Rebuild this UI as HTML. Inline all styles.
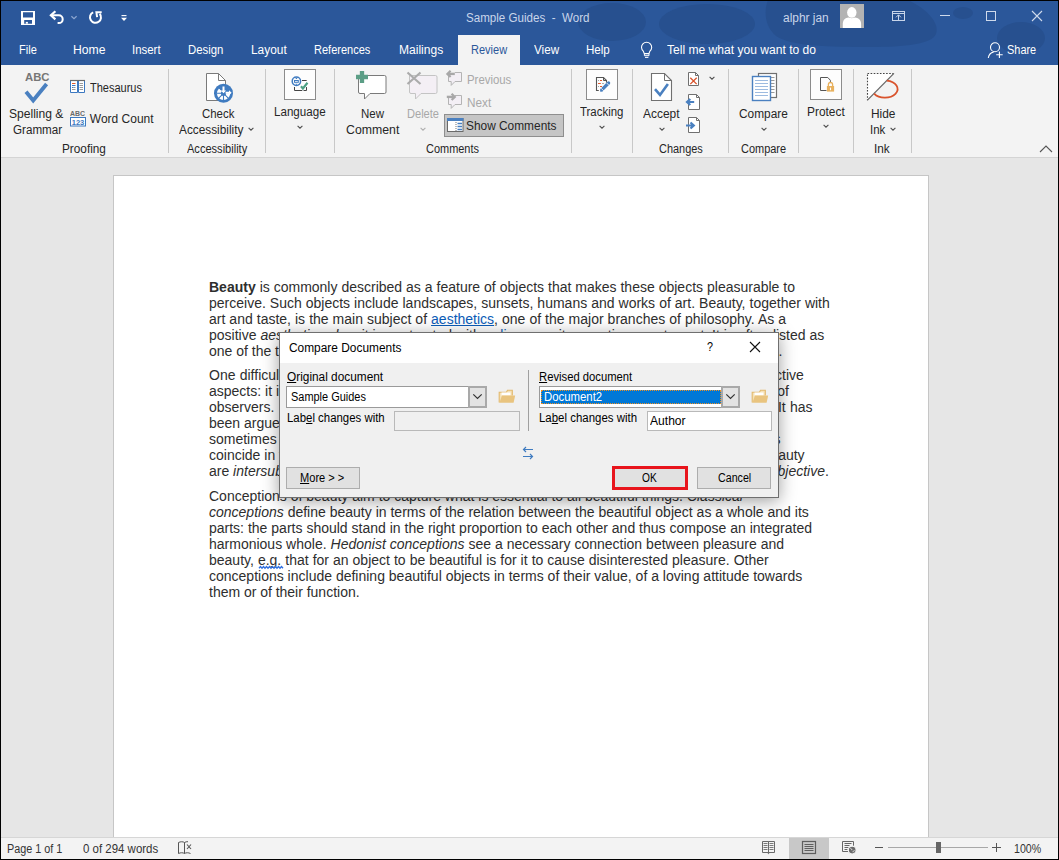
<!DOCTYPE html><html><head><meta charset="utf-8"><style>
*{margin:0;padding:0}
html,body{width:1059px;height:860px;overflow:hidden}
body{position:relative;background:#000;font-family:"Liberation Sans",sans-serif}
.tx{position:absolute;white-space:nowrap;line-height:normal;transform-origin:0 0}
.tx b{font-weight:bold}
.dl{position:absolute;left:0;white-space:nowrap;font-size:14px;line-height:normal;color:#2e2e2e}
.dl a{color:#0b5cb8;text-decoration:underline}
.dl u.w{text-decoration:none}
svg{overflow:visible}
</style></head><body><div style="position:absolute;left:1px;top:1px;width:1057px;height:64px;background:#2b579a"></div><svg style="position:absolute;left:0px;top:0px;" width="1059" height="65" viewBox="0 0 1059 65"><clipPath id="tbc"><rect x="1" y="1" width="1057" height="64"/></clipPath>
<g fill="#27508f" clip-path="url(#tbc)">
<ellipse cx="612" cy="22" rx="34" ry="19"/>
<ellipse cx="707" cy="24" rx="48" ry="20"/>
<path d="M768 0H908C925 8 940 22 936 34C932 44 905 47 870 47C830 47 790 46 776 36C764 26 764 10 768 0z"/>
<ellipse cx="1021" cy="38" rx="24" ry="16"/>
<ellipse cx="963" cy="13" rx="10" ry="6"/>
</g></svg><svg style="position:absolute;left:19px;top:9px;" width="18" height="18" viewBox="0 0 18 18"><path fill="#fff" fill-rule="evenodd" d="M2 2h14v14H2z M4 3.2h10v5.3H4z M5.2 11h7.8v3.7H5.2z"/><rect x="6.8" y="12.9" width="2.1" height="1.8" fill="#fff"/></svg><svg style="position:absolute;left:48px;top:9px;" width="20" height="18" viewBox="0 0 20 18"><path d="M2.8 6.3H10.8A3.9 3.9 0 0 1 10.8 14.1H9.6" fill="none" stroke="#fff" stroke-width="2"/>
<path d="M7.4 2.2L2.9 6.3L7.4 10.4" fill="none" stroke="#fff" stroke-width="2.2"/></svg><svg style="position:absolute;left:69px;top:13px;" width="10" height="8" viewBox="0 0 10 8"><path d="M2.4 3.2l2.6 2.4l2.6-2.4" fill="none" stroke="#8da7d1" stroke-width="1.2"/></svg><svg style="position:absolute;left:87px;top:9px;" width="18" height="18" viewBox="0 0 18 18"><path d="M6.17 3.32A5.5 5.5 0 1 0 12.7 4.76" fill="none" stroke="#fff" stroke-width="2"/>
<path d="M14.7 3.3H9.4L10.1 8.2" fill="none" stroke="#fff" stroke-width="2"/></svg><svg style="position:absolute;left:119px;top:12px;" width="10" height="12" viewBox="0 0 10 12"><path d="M2.5 3.6h5" stroke="#fff" stroke-width="1.1"/><path d="M2 5.8h6l-3 3.2z" fill="#fff"/></svg><span id="t0" class="tx" style="left:466.00px;top:10.94px;font-size:12px;color:#c9d5ea;transform:scaleX(0.9661);">Sample Guides&nbsp; -&nbsp; Word</span><span id="t1" class="tx" style="left:783.00px;top:10.94px;font-size:12px;color:#c9d5ea;transform:scaleX(0.9928);">alphr jan</span><div style="position:absolute;left:840px;top:4px;width:24px;height:24px;background:#b3b3b3"></div><svg style="position:absolute;left:840px;top:4px;" width="24" height="24" viewBox="0 0 24 24"><path d="M2.8 24V19.8C2.8 15.8 5.5 13.6 8.5 13.5H15C18 13.6 21.1 15.8 21.1 19.8V24z" fill="#fff"/><ellipse cx="11.8" cy="8.5" rx="5.1" ry="5.7" fill="#b3b3b3"/><ellipse cx="11.8" cy="8.4" rx="4.7" ry="5.3" fill="#fff"/></svg><svg style="position:absolute;left:891px;top:10px;" width="16" height="13" viewBox="0 0 16 13"><rect x="1.5" y="1.5" width="12" height="9" fill="none" stroke="#c8d5ea" stroke-width="1"/><path d="M1.5 3.5h12" stroke="#c8d5ea" stroke-width="1"/><path d="M7.5 5V10.5M5 7.3L7.5 4.8L10 7.3" fill="none" stroke="#c8d5ea" stroke-width="1"/></svg><div style="position:absolute;left:940px;top:15px;width:10px;height:1px;background:#cfdaec"></div><div style="position:absolute;left:986px;top:11px;width:10px;height:10px;border:1px solid #cfdaec;box-sizing:border-box"></div><svg style="position:absolute;left:1031px;top:10px;" width="12" height="12" viewBox="0 0 12 12"><path d="M1 1L11 11M11 1L1 11" stroke="#cfdaec" stroke-width="1.1"/></svg><span id="t2" class="tx" style="left:19.30px;top:42.69px;font-size:12.5px;color:#ffffff;transform:scaleX(0.8831);">File</span><span id="t3" class="tx" style="left:72.50px;top:42.69px;font-size:12.5px;color:#ffffff;transform:scaleX(0.9747);">Home</span><span id="t4" class="tx" style="left:132.30px;top:42.69px;font-size:12.5px;color:#ffffff;transform:scaleX(0.9147);">Insert</span><span id="t5" class="tx" style="left:188.40px;top:42.69px;font-size:12.5px;color:#ffffff;transform:scaleX(0.9095);">Design</span><span id="t6" class="tx" style="left:251.30px;top:42.69px;font-size:12.5px;color:#ffffff;transform:scaleX(0.9512);">Layout</span><span id="t7" class="tx" style="left:314.30px;top:42.69px;font-size:12.5px;color:#ffffff;transform:scaleX(0.8821);">References</span><span id="t8" class="tx" style="left:398.60px;top:42.69px;font-size:12.5px;color:#ffffff;transform:scaleX(0.9638);">Mailings</span><div style="position:absolute;left:458px;top:35px;width:62px;height:30px;background:#f3f3f3"></div><span id="t9" class="tx" style="left:470.60px;top:42.69px;font-size:12.5px;color:#2b579a;transform:scaleX(0.8805);">Review</span><span id="t10" class="tx" style="left:533.90px;top:42.69px;font-size:12.5px;color:#ffffff;transform:scaleX(0.9340);">View</span><span id="t11" class="tx" style="left:586.20px;top:42.69px;font-size:12.5px;color:#ffffff;transform:scaleX(0.9254);">Help</span><svg style="position:absolute;left:638px;top:40px;" width="16" height="20" viewBox="0 0 16 20"><path d="M5.3 11.2A5.1 5.1 0 1 1 11.9 11.2L10.9 13.6H6.3z" fill="none" stroke="#fff" stroke-width="1.1" stroke-linejoin="round"/><path d="M6.4 13.6h4.6v2.1H6.4z" fill="none" stroke="#fff" stroke-width="1"/><path d="M7 17.4h3.4" stroke="#fff" stroke-width="1"/></svg><span id="t12" class="tx" style="left:666.50px;top:42.69px;font-size:12.5px;color:#ffffff;transform:scaleX(0.9660);">Tell me what you want to do</span><svg style="position:absolute;left:985px;top:40px;" width="20" height="20" viewBox="0 0 20 20"><circle cx="10" cy="7.2" r="4.5" fill="none" stroke="#fff" stroke-width="1.1"/><path d="M3.3 18C3.8 14.6 5.8 12.6 8.6 12.1" fill="none" stroke="#fff" stroke-width="1.1"/><path d="M14.4 11.4v6.6M11.2 14.7h6.5" stroke="#fff" stroke-width="1.1"/></svg><span id="t13" class="tx" style="left:1006.70px;top:42.69px;font-size:12.5px;color:#ffffff;transform:scaleX(0.8753);">Share</span><div style="position:absolute;left:1px;top:65px;width:1057px;height:92px;background:#f3f3f3"></div><div style="position:absolute;left:1px;top:157px;width:1057px;height:1px;background:#d4d4d4"></div><div style="position:absolute;left:168px;top:69px;width:1px;height:84px;background:#c8c8c8"></div><div style="position:absolute;left:265px;top:69px;width:1px;height:84px;background:#c8c8c8"></div><div style="position:absolute;left:334px;top:69px;width:1px;height:84px;background:#c8c8c8"></div><div style="position:absolute;left:571px;top:69px;width:1px;height:84px;background:#c8c8c8"></div><div style="position:absolute;left:632px;top:69px;width:1px;height:84px;background:#c8c8c8"></div><div style="position:absolute;left:728px;top:69px;width:1px;height:84px;background:#c8c8c8"></div><div style="position:absolute;left:798px;top:69px;width:1px;height:84px;background:#c8c8c8"></div><div style="position:absolute;left:853px;top:69px;width:1px;height:84px;background:#c8c8c8"></div><div style="position:absolute;left:911px;top:69px;width:1px;height:84px;background:#c8c8c8"></div><span id="t14" class="tx" style="left:24.50px;top:70.75px;font-size:11px;color:#767676;transform:scaleX(1.0275);"><b>ABC</b></span><svg style="position:absolute;left:22px;top:82px;" width="28" height="22" viewBox="0 0 28 22"><path d="M4 9.8L11.2 18.4L24.6 2" fill="none" stroke="#4a80c0" stroke-width="3.9" stroke-linejoin="miter"/></svg><span id="t15" class="tx" style="left:9.40px;top:106.94px;font-size:12px;color:#262626;transform:scaleX(1.0065);">Spelling &amp;</span><span id="t16" class="tx" style="left:12.70px;top:122.64px;font-size:12px;color:#262626;transform:scaleX(0.9690);">Grammar</span><svg style="position:absolute;left:69px;top:79px;" width="18" height="15" viewBox="0 0 18 15"><path d="M1.5 1.5H8.5V13.5H1.5zM9.5 1.5H15.5V13.5H9.5z" fill="#fff" stroke="#3c78c0" stroke-width="1"/><path d="M1 1.5H16" stroke="#6a6a6a" stroke-width="1.2"/><path d="M3 4.5h3.5" stroke="#e05a2e"/><path d="M3 6.5h3.5M3 8.5h1.5" stroke="#3c78c0"/><path d="M4.5 8.5h2M3 10.5h3.5M10.5 4.5h3.5M10.5 6.5h3.5M10.5 8.5h3.5M10.5 10.5h3.5" stroke="#9a9a9a"/></svg><span id="t17" class="tx" style="left:89.80px;top:81.14px;font-size:12px;color:#262626;transform:scaleX(0.9171);">Thesaurus</span><span id="t18" class="tx" style="left:70.00px;top:109.01px;font-size:7.5px;color:#6a6a6a;transform:scaleX(0.9231);"><b>ABC</b></span><svg style="position:absolute;left:69px;top:116px;" width="18" height="11" viewBox="0 0 18 11"><rect x="1.5" y="1.5" width="15" height="8.5" fill="#fff" stroke="#3c78c0"/><text x="9" y="8.6" font-family="Liberation Sans" font-weight="bold" font-size="7.5" fill="#3c78c0" text-anchor="middle">123</text></svg><span id="t19" class="tx" style="left:89.80px;top:112.04px;font-size:12px;color:#262626;">Word Count</span><span id="t20" class="tx" style="left:61.60px;top:141.84px;font-size:12px;color:#262626;transform:scaleX(0.9820);">Proofing</span><svg style="position:absolute;left:204px;top:72px;" width="32" height="32" viewBox="0 0 32 32"><path d="M2.5 1.5h12l7 7v20h-19z" fill="#fff" stroke="#7a7a7a"/><path d="M14.5 1.5v7h7" fill="none" stroke="#7a7a7a"/></svg><svg style="position:absolute;left:214px;top:84px;" width="19" height="19" viewBox="0 0 19 19"><circle cx="9.5" cy="9.3" r="9.5" fill="#3f7bc0"/><circle cx="9.5" cy="9.3" r="6.6" fill="#fff"/>
<path d="M9.5 9.3L4.55 4.35A7 7 0 0 1 16.5 9.3z" fill="#3f7bc0"/><circle cx="9.5" cy="9.3" r="2.6" fill="#3f7bc0"/>
<path d="M2.5 9.3h7M9.5 9.3v7M9.5 9.3l-5 5M9.5 9.3l5 5" stroke="#3f7bc0" stroke-width="1.1"/>
<path d="M8.5 2.6h2v4h1.6L9.5 9.2L6.9 6.6h1.6z" fill="#fff"/><path d="M11.6 7.8h3.4V6.2l2.6 2.6l-2.6 2.6V9.8h-3.4z" fill="#fff"/>
<path d="M5.2 4.9L7.6 7.3L5.6 7.8z" fill="#fff"/></svg><span id="t21" class="tx" style="left:201.50px;top:106.94px;font-size:12px;color:#262626;transform:scaleX(0.9525);">Check</span><span id="t22" class="tx" style="left:179.40px;top:122.64px;font-size:12px;color:#262626;transform:scaleX(0.9853);">Accessibility</span><svg style="position:absolute;left:247px;top:125.5px;" width="8" height="6" viewBox="0 0 8 6"><path d="M1.6 1.8l2.4 2.4l2.4-2.4" fill="none" stroke="#505050" stroke-width="1.1"/></svg><span id="t23" class="tx" style="left:186.60px;top:141.64px;font-size:12px;color:#262626;transform:scaleX(0.9211);">Accessibility</span><div style="position:absolute;left:284px;top:69px;width:32px;height:31px;background:#fdfdfd;border:1px solid #8c8c8c;box-sizing:border-box"></div><svg style="position:absolute;left:284px;top:69px;" width="32" height="31" viewBox="0 0 32 31"><circle cx="12.4" cy="12.3" r="4.2" fill="none" stroke="#3f7bc0" stroke-width="1.5"/><rect x="10.5" y="11.5" width="3.8" height="1.8" fill="none" stroke="#3f7bc0" stroke-width="1"/><path d="M11.3 9.9L12.4 8.5L13.5 9.9zM11.3 14.7L12.4 16.1L13.5 14.7z" fill="#3f7bc0"/><path d="M18 11.5h4.7" stroke="#444" stroke-width="1"/><path d="M10.5 18v3.5h12v-3.5" fill="none" stroke="#444" stroke-width="1"/><path d="M17 17.2l1.9 2.3l4.6-5.8" fill="none" stroke="#fff" stroke-width="3.6"/><path d="M17 17.2l1.9 2.3l4.6-5.8" fill="none" stroke="#4ea084" stroke-width="2.2"/></svg><span id="t24" class="tx" style="left:274.40px;top:105.14px;font-size:12px;color:#262626;transform:scaleX(0.9665);">Language</span><svg style="position:absolute;left:296px;top:123.5px;" width="8" height="6" viewBox="0 0 8 6"><path d="M1.6 1.8l2.4 2.4l2.4-2.4" fill="none" stroke="#505050" stroke-width="1.1"/></svg><svg style="position:absolute;left:354px;top:69px;" width="34" height="33" viewBox="0 0 34 33"><path d="M4.5 6.5H30.5a1.5 1.5 0 0 1 1.5 1.5V23a1.5 1.5 0 0 1-1.5 1.5H16L10.5 30V24.5H6a1.5 1.5 0 0 1-1.5-1.5z" fill="#fff" stroke="#7a7a7a" stroke-width="1"/><path d="M2 8h12M8 2v12" stroke="#5c9e86" stroke-width="4.3"/></svg><span id="t25" class="tx" style="left:360.60px;top:106.94px;font-size:12px;color:#262626;transform:scaleX(0.9577);">New</span><span id="t26" class="tx" style="left:345.50px;top:122.64px;font-size:12px;color:#262626;transform:scaleX(1.0247);">Comment</span><svg style="position:absolute;left:405px;top:70px;" width="34" height="32" viewBox="0 0 34 32"><path d="M4.5 5.5H30.5a1.5 1.5 0 0 1 1.5 1.5V22a1.5 1.5 0 0 1-1.5 1.5H16L10.5 29V23.5H6a1.5 1.5 0 0 1-1.5-1.5z" fill="#f4eff5" stroke="#c4c4c4" stroke-width="1"/><path d="M2.5 2.5l13 11.5M2.5 14l13-11.5" stroke="#ababab" stroke-width="2.2"/></svg><span id="t27" class="tx" style="left:406.80px;top:106.94px;font-size:12px;color:#a8a8a8;transform:scaleX(0.9225);">Delete</span><svg style="position:absolute;left:419px;top:125.5px;" width="8" height="6" viewBox="0 0 8 6"><path d="M1.6 1.8l2.4 2.4l2.4-2.4" fill="none" stroke="#b0b0b0" stroke-width="1.1"/></svg><svg style="position:absolute;left:445px;top:69px;" width="20" height="18" viewBox="0 0 20 18"><path d="M3.5 5.5V12.5H6.2V16.4L10 12.5H16.5V3.5H9.8" fill="#f3eff5" stroke="#b4b4b4" stroke-width="1" stroke-linejoin="round"/><path d="M4 6v6h12v-8h-6z" fill="#f3eff5"/><path d="M3 4.9H9.8" stroke="#a8a8a8" stroke-width="2.4"/><path d="M5.6 1.8L2.4 4.9L5.6 8" fill="none" stroke="#a8a8a8" stroke-width="2.2"/></svg><span id="t28" class="tx" style="left:466.50px;top:73.04px;font-size:12px;color:#a8a8a8;transform:scaleX(0.9489);">Previous</span><svg style="position:absolute;left:445px;top:92px;" width="20" height="18" viewBox="0 0 20 18"><path d="M3.5 5.5V12.5H6.2V16.4L10 12.5H16.5V3.5H9.8" fill="#f3eff5" stroke="#b4b4b4" stroke-width="1" stroke-linejoin="round"/><path d="M4 6v6h12v-8h-6z" fill="#f3eff5"/><path d="M1.8 4.9H8.6" stroke="#a8a8a8" stroke-width="2.4"/><path d="M6.6 1.8L9.8 4.9L6.6 8" fill="none" stroke="#a8a8a8" stroke-width="2.2"/></svg><span id="t29" class="tx" style="left:466.50px;top:95.94px;font-size:12px;color:#a8a8a8;transform:scaleX(0.9803);">Next</span><div style="position:absolute;left:444px;top:114px;width:120px;height:23px;background:#c5c5c5;border:1px solid #8e8e8e;box-sizing:border-box"></div><svg style="position:absolute;left:446px;top:117px;" width="18" height="16" viewBox="0 0 18 16"><rect x="1.5" y="1.5" width="15.5" height="13" fill="#fff" stroke="#6a6a6a"/><rect x="1" y="1" width="16.5" height="3" fill="#4a80c0"/><path d="M10 5v9" stroke="#777" stroke-dasharray="1 1"/><path d="M11.5 6.5h4.5M11.5 9.5h4.5M11.5 12.5h4.5" stroke="#4a80c0" stroke-width="1.3"/></svg><span id="t30" class="tx" style="left:466.10px;top:118.74px;font-size:12px;color:#262626;transform:scaleX(0.9904);">Show Comments</span><span id="t31" class="tx" style="left:426.40px;top:141.84px;font-size:12px;color:#262626;transform:scaleX(0.9135);">Comments</span><div style="position:absolute;left:586px;top:69px;width:32px;height:31px;background:#fdfdfd;border:1px solid #8c8c8c;box-sizing:border-box"></div><svg style="position:absolute;left:586px;top:69px;" width="32" height="31" viewBox="0 0 32 31"><path d="M12.8 21.5H10.5V8.5H17.5L20.5 11.5V13.8" fill="none" stroke="#555" stroke-width="1.1"/><path d="M17.5 8.5V11.5H20.5" fill="none" stroke="#555" stroke-width="1"/><path d="M14 11.5h2M12 14.5h2.8M14 17.5h2" stroke="#e05a2e" stroke-width="1.1"/><path d="M12 11.5h.9M16.2 14.5h1.6M12 17.5h.9" stroke="#999" stroke-width="1"/><path d="M15.8 20.8L22.6 14" stroke="#4a80c0" stroke-width="3.3" stroke-linecap="round"/><path d="M14 22.8L14.9 19.5L17.3 21.9z" fill="#4a80c0"/><path d="M15.1 19.2l2.6 2.6M20.5 13.8l2.6 2.6" stroke="#fff" stroke-width="0.8"/></svg><span id="t32" class="tx" style="left:580.20px;top:105.14px;font-size:12px;color:#262626;transform:scaleX(0.9522);">Tracking</span><svg style="position:absolute;left:598px;top:123.5px;" width="8" height="6" viewBox="0 0 8 6"><path d="M1.6 1.8l2.4 2.4l2.4-2.4" fill="none" stroke="#505050" stroke-width="1.1"/></svg><svg style="position:absolute;left:650px;top:72px;" width="24" height="30" viewBox="0 0 24 30"><path d="M1.5 1.5h13l7 7v20h-20z" fill="#fff" stroke="#707070" stroke-width="1.1"/><path d="M14.5 1.5v7h7" fill="none" stroke="#707070"/><path d="M5 17.2L10 22.9L17.9 11.9" fill="none" stroke="#4a80c0" stroke-width="2.6"/></svg><span id="t33" class="tx" style="left:643.30px;top:106.94px;font-size:12px;color:#262626;transform:scaleX(0.9949);">Accept</span><svg style="position:absolute;left:658px;top:125.5px;" width="8" height="6" viewBox="0 0 8 6"><path d="M1.6 1.8l2.4 2.4l2.4-2.4" fill="none" stroke="#505050" stroke-width="1.1"/></svg><svg style="position:absolute;left:687px;top:71px;" width="14" height="16" viewBox="0 0 14 16"><path d="M1.5 1.5H8.5L11.5 4.5V14.5H1.5z" fill="#fff" stroke="#707070"/><path d="M8.5 1.5V4.5H11.5" fill="none" stroke="#707070"/><path d="M3.3 6.7L9.7 13.1M9.7 6.7L3.3 13.1" stroke="#d9532c" stroke-width="1.3"/></svg><svg style="position:absolute;left:708px;top:75px;" width="8" height="6" viewBox="0 0 8 6"><path d="M1.6 1.8l2.4 2.4l2.4-2.4" fill="none" stroke="#505050" stroke-width="1.1"/></svg><svg style="position:absolute;left:684px;top:93px;" width="18" height="18" viewBox="0 0 18 18"><path d="M4.5 1.5H12.5L15.5 4.5V16.5H4.5z" fill="#fff" stroke="#707070"/><path d="M12.5 1.5V4.5H15.5" fill="none" stroke="#707070"/><path d="M10.2 9H3.5M6.3 6L3 9L6.3 12" fill="none" stroke="#4a80c0" stroke-width="2.2"/></svg><svg style="position:absolute;left:684px;top:116px;" width="18" height="18" viewBox="0 0 18 18"><path d="M4.5 1.5H12.5L15.5 4.5V16.5H4.5z" fill="#fff" stroke="#707070"/><path d="M12.5 1.5V4.5H15.5" fill="none" stroke="#707070"/><path d="M2 9.5H9M6.5 6.5L9.8 9.5L6.5 12.5" fill="none" stroke="#4a80c0" stroke-width="2.2"/></svg><span id="t34" class="tx" style="left:658.60px;top:141.64px;font-size:12px;color:#262626;transform:scaleX(0.9116);">Changes</span><svg style="position:absolute;left:751px;top:72px;" width="28" height="30" viewBox="0 0 28 30"><rect x="7.5" y="1.5" width="18" height="24" fill="#fff" stroke="#707070" stroke-width="1.2"/><path d="M20 5.5h3.5M20 8.5h3.5M20 11.5h3.5M20 14.5h3.5M20 17.5h3.5M20 20.5h3.5" stroke="#999" stroke-width="1"/><rect x="1.5" y="4.5" width="18" height="24" fill="#fff" stroke="#4a80c0" stroke-width="1.4"/><path d="M4 8.5h13M4 11.5h13M4 14.5h13M4 17.5h13M4 20.5h13M4 23.5h13" stroke="#9dbbe0" stroke-width="1.1"/></svg><span id="t35" class="tx" style="left:739.40px;top:106.94px;font-size:12px;color:#262626;transform:scaleX(0.9887);">Compare</span><svg style="position:absolute;left:760px;top:125.5px;" width="8" height="6" viewBox="0 0 8 6"><path d="M1.6 1.8l2.4 2.4l2.4-2.4" fill="none" stroke="#505050" stroke-width="1.1"/></svg><span id="t36" class="tx" style="left:740.50px;top:141.64px;font-size:12px;color:#262626;transform:scaleX(0.9137);">Compare</span><div style="position:absolute;left:810px;top:69px;width:32px;height:31px;background:#fdfdfd;border:1px solid #8c8c8c;box-sizing:border-box"></div><svg style="position:absolute;left:810px;top:69px;" width="32" height="31" viewBox="0 0 32 31"><path d="M10.5 8.5V21.5H16.5M10.5 8.5H17.8L20.4 11.3V13" fill="none" stroke="#555" stroke-width="1"/><path d="M18.4 17.2V15.6a2.1 2.1 0 0 1 4.2 0V17.2" fill="none" stroke="#e8b15e" stroke-width="1.3"/><rect x="16.9" y="17" width="7.2" height="5.6" fill="#e8b15e"/><path d="M20.5 18.6v2.6" stroke="#fff" stroke-width="1.1"/></svg><span id="t37" class="tx" style="left:807.40px;top:104.94px;font-size:12px;color:#262626;transform:scaleX(0.9917);">Protect</span><svg style="position:absolute;left:822px;top:123px;" width="8" height="6" viewBox="0 0 8 6"><path d="M1.6 1.8l2.4 2.4l2.4-2.4" fill="none" stroke="#505050" stroke-width="1.1"/></svg><svg style="position:absolute;left:864px;top:70px;" width="38" height="34" viewBox="0 0 38 34"><path d="M3.5 3.5H29.8L3.3 30.3z" fill="#fff"/><path d="M3.5 3.5H29.5M3.5 4.5V30" fill="none" stroke="#444" stroke-width="1.1" stroke-dasharray="1.6 1.5"/><path d="M3.2 30.4L29.9 3.4" stroke="#666" stroke-width="1.3"/><path d="M22.8 10.6A12.6 8.6 0 1 1 10.2 23.6" fill="none" stroke="#d9532c" stroke-width="1.8"/></svg><span id="t38" class="tx" style="left:870.50px;top:107.14px;font-size:12px;color:#262626;transform:scaleX(0.9924);">Hide</span><span id="t39" class="tx" style="left:869.70px;top:122.74px;font-size:12px;color:#262626;transform:scaleX(0.9553);">Ink</span><svg style="position:absolute;left:888.5px;top:125.5px;" width="8" height="6" viewBox="0 0 8 6"><path d="M1.6 1.8l2.4 2.4l2.4-2.4" fill="none" stroke="#505050" stroke-width="1.1"/></svg><span id="t40" class="tx" style="left:874.20px;top:141.84px;font-size:12px;color:#262626;transform:scaleX(0.9803);">Ink</span><svg style="position:absolute;left:1038px;top:144px;" width="16" height="10" viewBox="0 0 16 10"><path d="M2 8l6-6l6 6" fill="none" stroke="#555" stroke-width="1.1"/></svg><div style="position:absolute;left:1px;top:158px;width:1057px;height:679px;background:#e6e6e6"></div><div style="position:absolute;left:113px;top:175px;width:816px;height:662px;background:#fff;border:1px solid #c6c6c6;border-bottom:none;box-sizing:border-box"></div><div style="position:absolute;left:209px;top:0;width:700px;height:837px;overflow:visible"><div id="d0" class="dl" style="top:278.93px;word-spacing:0.057px"><b>Beauty</b> is commonly described as a feature of objects that makes these objects pleasurable to</div><div id="d1" class="dl" style="top:295.02px;word-spacing:0.123px">perceive. Such objects include landscapes, sunsets, humans and works of art. Beauty, together with</div><div id="d2" class="dl" style="top:311.11px;word-spacing:0.131px">art and taste, is the main subject of <a>aesthetics</a>, one of the major branches of philosophy. As a</div><div id="d3" class="dl" style="top:327.20px;word-spacing:0.031px">positive <i>aesthetic value</i>, it is contrasted with <a>ugliness</a> as its negative counterpart. It is often listed as</div><div id="d4" class="dl" style="top:343.29px;word-spacing:-0.027px">one of the three fundamental concepts of human understanding besides truth and goodness.</div><div id="d5" class="dl" style="top:366.78px;word-spacing:0.368px">One difficulty in understanding beauty is due to the fact that it has both objective and subjective</div><div id="d6" class="dl" style="top:382.87px;word-spacing:0.051px">aspects: it is seen as a property of things but also as depending on the emotional response of</div><div id="d7" class="dl" style="top:398.96px;word-spacing:0.468px">observers. Because of its subjective side, beauty is said to be &quot;in the eye of the beholder&quot;. It has</div><div id="d8" class="dl" style="top:415.05px;">been argued that the ability on the side of the subject needed to perceive and judge beauty,</div><div id="d9" class="dl" style="top:431.14px;word-spacing:0.029px">sometimes referred to as the &quot;sense of taste&quot;, can be trained and that the verdicts of experts</div><div id="d10" class="dl" style="top:447.23px;word-spacing:0.031px">coincide in the long run. This would suggest that the standards of validity of judgments of beauty</div><div id="d11" class="dl" style="top:463.32px;word-spacing:-0.026px">are <i>intersubjective</i>, i.e. dependent on a group of judges, rather than fully subjective or fully <i>objective</i>.</div><div id="d12" class="dl" style="top:487.91px;word-spacing:0.003px">Conceptions of beauty aim to capture what is essential to all beautiful things. <i>Classical</i></div><div id="d13" class="dl" style="top:504.00px;word-spacing:0.032px"><i>conceptions</i> define beauty in terms of the relation between the beautiful object as a whole and its</div><div id="d14" class="dl" style="top:520.09px;word-spacing:0.038px">parts: the parts should stand in the right proportion to each other and thus compose an integrated</div><div id="d15" class="dl" style="top:536.18px;word-spacing:0.061px">harmonious whole. <i>Hedonist conceptions</i> see a necessary connection between pleasure and</div><div id="d16" class="dl" style="top:552.27px;word-spacing:0.121px">beauty, <u class="w">e.g.</u> that for an object to be beautiful is for it to cause disinterested pleasure. Other</div><div id="d17" class="dl" style="top:568.36px;word-spacing:0.012px">conceptions include defining beautiful objects in terms of their value, of a loving attitude towards</div><div id="d18" class="dl" style="top:584.45px;word-spacing:-0.092px">them or of their function.</div></div><svg style="position:absolute;left:258px;top:564.8px;" width="26" height="5" viewBox="0 0 26 5"><path d="M1 3.2L2.5 1.5L4 3.2L5.5 1.5L7 3.2L8.5 1.5L10 3.2L11.5 1.5L13 3.2L14.5 1.5L16 3.2L17.5 1.5L19 3.2L20.5 1.5L22 3.2L23.5 1.5L25 3.2" fill="none" stroke="#2f6fe0" stroke-width="1.3"/></svg><div style="position:absolute;left:1px;top:837px;width:1057px;height:1px;background:#d6d6d6"></div><div style="position:absolute;left:1px;top:838px;width:1057px;height:21px;background:#f3f3f3"></div><span id="t41" class="tx" style="left:6.60px;top:841.84px;font-size:12px;color:#333333;transform:scaleX(0.9024);">Page 1 of 1</span><span id="t42" class="tx" style="left:83.10px;top:841.84px;font-size:12px;color:#333333;transform:scaleX(0.9553);">0 of 294 words</span><svg style="position:absolute;left:176px;top:840px;" width="18" height="15" viewBox="0 0 18 15"><path d="M2.5 2.5c2-1 4.5-1 6 0v11c-1.5-1-4-1-6 0z" fill="none" stroke="#555"/><path d="M8.5 2.5c1-.7 2.3-.9 3.5-.8M8.5 13.5c1.5-1 4-1 6 0" fill="none" stroke="#555"/><path d="M11 4.5l4 4.5M15 4.5l-4 4.5" stroke="#555" stroke-width="1.1"/></svg><svg style="position:absolute;left:760px;top:840px;" width="18" height="15" viewBox="0 0 18 15"><path d="M2.5 1.5H8.5V12.5H2.5zM8.5 1.5H14.5V12.5H8.5z" fill="none" stroke="#6a6a6a" stroke-width="1"/><path d="M3.5 3.5h4M3.5 5.5h4M3.5 7.5h4M3.5 9.5h4M9.5 3.5h4M9.5 5.5h4M9.5 7.5h4M9.5 9.5h4" stroke="#7a7a7a" stroke-width="1"/><path d="M8.5 2v11.5M7.3 12.5L8.5 13.7L9.7 12.5" fill="none" stroke="#6a6a6a" stroke-width="1"/></svg><div style="position:absolute;left:789px;top:838px;width:40px;height:21px;background:#c8c8c8"></div><svg style="position:absolute;left:801px;top:840px;" width="18" height="15" viewBox="0 0 18 15"><rect x="1.5" y="1.5" width="13" height="12" fill="none" stroke="#5e5e5e" stroke-width="1.2"/><path d="M3.5 4.5h9M3.5 6.5h9M3.5 8.5h9M3.5 10.5h9" stroke="#5e5e5e" stroke-width="1"/></svg><svg style="position:absolute;left:841px;top:840px;" width="18" height="15" viewBox="0 0 18 15"><path d="M1.5 1.5H12.5V11.5H1.5z" fill="none" stroke="#666" stroke-width="1"/><path d="M3.5 3.5h7M3.5 5.5h5M3.5 7.5h4M3.5 9.5h3" stroke="#666" stroke-width="1"/><circle cx="11.2" cy="10.1" r="3.9" fill="#6a6a6a" stroke="#f3f3f3" stroke-width="1.2"/><path d="M9.3 8.3c1 .2 1.6.9 1.5 1.9M12 12.2c0-1 .6-1.6 1.6-1.6" fill="none" stroke="#f3f3f3" stroke-width=".9"/></svg><div style="position:absolute;left:875px;top:847px;width:8px;height:1px;background:#555"></div><div style="position:absolute;left:888px;top:847px;width:100px;height:1px;background:#a8a8a8"></div><div style="position:absolute;left:936px;top:842px;width:5px;height:11px;background:#666"></div><div style="position:absolute;left:992px;top:847px;width:9px;height:1px;background:#555"></div><div style="position:absolute;left:996px;top:843px;width:1px;height:9px;background:#555"></div><span id="t43" class="tx" style="left:1014.00px;top:841.84px;font-size:12px;color:#333333;transform:scaleX(0.8859);">100%</span><div style="position:absolute;left:279px;top:332px;width:500px;height:166px;background:#f0f0f0;border:1px solid #6f6f6f;box-sizing:border-box;box-shadow:0 3px 16px rgba(0,0,0,0.38)"></div><div style="position:absolute;left:280px;top:333px;width:498px;height:30px;background:#fff"></div><span id="t44" class="tx" style="left:288.60px;top:340.94px;font-size:12px;color:#000;transform:scaleX(0.9913);">Compare Documents</span><span id="t45" class="tx" style="left:707.30px;top:340.49px;font-size:12.5px;color:#000;transform:scaleX(0.8629);">?</span><svg style="position:absolute;left:749px;top:341px;" width="12" height="12" viewBox="0 0 12 12"><path d="M1 1L11 11M11 1L1 11" stroke="#111" stroke-width="1.1"/></svg><span id="t46" class="tx" style="left:286.60px;top:370.34px;font-size:12px;color:#000;transform:scaleX(0.9866);"><u>O</u>riginal document</span><div style="position:absolute;left:286px;top:386px;width:201px;height:22px;background:#fff;border:1px solid #9a9a9a;box-sizing:border-box"></div><div style="position:absolute;left:468px;top:386px;width:19px;height:22px;background:#e3e3e3;border:2px solid #a9a9a9;box-sizing:border-box"></div><svg style="position:absolute;left:468px;top:386px;" width="19" height="22" viewBox="0 0 19 22"><path d="M5.3 8.3l4.2 4.2l4.2-4.2" fill="none" stroke="#333" stroke-width="1.2"/></svg><span id="t47" class="tx" style="left:290.60px;top:390.44px;font-size:12px;color:#000;transform:scaleX(0.9129);">Sample Guides</span><svg style="position:absolute;left:497px;top:388px;" width="20" height="17" viewBox="0 0 20 17"><path d="M2.2 14.5V4.2H9.4L10.5 2.3H15.3V7.5" fill="#f6e2b8" stroke="#e2b96e" stroke-width="1.1"/><path d="M4.5 4.5h9v3h-9z" fill="#fff"/><path d="M2.4 14.7L5 7.5H18.2L16.6 14.7z" fill="#e9c47f"/></svg><span id="t48" class="tx" style="left:286.60px;top:411.04px;font-size:12px;color:#000;transform:scaleX(0.9507);">Lab<u>e</u>l changes with</span><div style="position:absolute;left:394px;top:411px;width:126px;height:20px;background:#f0f0f0;border:1px solid #b9b9b9;box-sizing:border-box"></div><div style="position:absolute;left:528px;top:370px;width:1px;height:61px;background:#a0a0a0"></div><span id="t49" class="tx" style="left:539.40px;top:370.34px;font-size:12px;color:#000;transform:scaleX(0.9376);"><u>R</u>evised document</span><div style="position:absolute;left:539px;top:386px;width:201px;height:22px;background:#fff;border:1px solid #9a9a9a;box-sizing:border-box"></div><div style="position:absolute;left:541px;top:389.5px;width:180px;height:14px;background:#0078d7;outline:1.5px dotted #f09020;outline-offset:-1px"></div><div style="position:absolute;left:721px;top:386px;width:19px;height:22px;background:#e3e3e3;border:2px solid #a9a9a9;box-sizing:border-box"></div><svg style="position:absolute;left:721px;top:386px;" width="19" height="22" viewBox="0 0 19 22"><path d="M5.3 8.3l4.2 4.2l4.2-4.2" fill="none" stroke="#333" stroke-width="1.2"/></svg><span id="t50" class="tx" style="left:543.80px;top:390.44px;font-size:12px;color:#fff;transform:scaleX(0.9483);">Document2</span><svg style="position:absolute;left:750px;top:388px;" width="20" height="17" viewBox="0 0 20 17"><path d="M2.2 14.5V4.2H9.4L10.5 2.3H15.3V7.5" fill="#f6e2b8" stroke="#e2b96e" stroke-width="1.1"/><path d="M4.5 4.5h9v3h-9z" fill="#fff"/><path d="M2.4 14.7L5 7.5H18.2L16.6 14.7z" fill="#e9c47f"/></svg><span id="t51" class="tx" style="left:539.40px;top:411.04px;font-size:12px;color:#000;transform:scaleX(0.9536);">La<u>b</u>el changes with</span><div style="position:absolute;left:647px;top:411px;width:125px;height:20px;background:#fff;border:1px solid #b9b9b9;box-sizing:border-box"></div><span id="t52" class="tx" style="left:650.20px;top:414.34px;font-size:12px;color:#000;transform:scaleX(1.0068);">Author</span><svg style="position:absolute;left:520px;top:445px;" width="16" height="16" viewBox="0 0 16 16"><path d="M13 4.5H3.5M6 2L3.5 4.5L6 7" fill="none" stroke="#3f7bc0" stroke-width="1.2"/><path d="M3 11.5h9.5M10 9l2.5 2.5L10 14" fill="none" stroke="#3f7bc0" stroke-width="1.2"/></svg><div style="position:absolute;left:286px;top:467px;width:74px;height:22px;background:#e1e1e1;border:1px solid #adadad;box-sizing:border-box"></div><span id="t53" class="tx" style="left:300.10px;top:470.84px;font-size:12px;color:#000;transform:scaleX(0.9223);"><u>M</u>ore &gt; &gt;</span><div style="position:absolute;left:612px;top:466px;width:76px;height:24px;background:#e1e1e1;border:3px solid #e8141c;box-sizing:border-box"></div><span id="t54" class="tx" style="left:642.40px;top:470.84px;font-size:12px;color:#000;transform:scaleX(0.8476);">OK</span><div style="position:absolute;left:697px;top:467px;width:74px;height:22px;background:#e1e1e1;border:1px solid #adadad;box-sizing:border-box"></div><span id="t55" class="tx" style="left:717.80px;top:470.84px;font-size:12px;color:#000;transform:scaleX(0.8887);">Cancel</span></body></html>
